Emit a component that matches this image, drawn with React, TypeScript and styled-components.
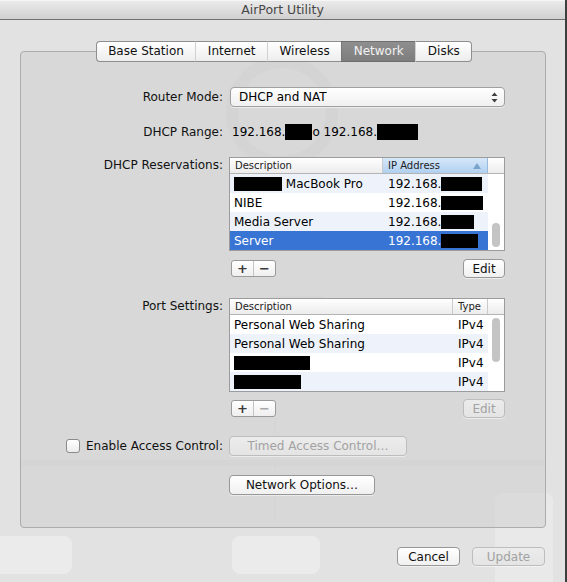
import React from 'react';
import styled, { createGlobalStyle, css } from 'styled-components';

const GlobalStyle = createGlobalStyle`
  html, body {
    margin: 0;
    padding: 0;
  }

  body {
    font-family: "DejaVu Sans", "Liberation Sans", sans-serif;
    background: #e2e2e2;
    color: #000;
  }
`;

type Cell = { text?: string; redact?: number; redactBefore?: boolean };
type Row = { desc: Cell; value: Cell; tone: 'plain' | 'alt' | 'selected' };

const reservations: Row[] = [
  { desc: { text: 'MacBook Pro', redact: 48, redactBefore: true }, value: { text: '192.168.', redact: 41 }, tone: 'alt' },
  { desc: { text: 'NIBE' }, value: { text: '192.168.', redact: 42 }, tone: 'plain' },
  { desc: { text: 'Media Server' }, value: { text: '192.168.', redact: 33 }, tone: 'alt' },
  { desc: { text: 'Server' }, value: { text: '192.168.', redact: 37 }, tone: 'selected' },
];

const ports: Row[] = [
  { desc: { text: 'Personal Web Sharing' }, value: { text: 'IPv4' }, tone: 'plain' },
  { desc: { text: 'Personal Web Sharing' }, value: { text: 'IPv4' }, tone: 'alt' },
  { desc: { redact: 76 }, value: { text: 'IPv4' }, tone: 'plain' },
  { desc: { redact: 67 }, value: { text: 'IPv4' }, tone: 'alt' },
];

function CellContent({ cell }: { cell: Cell }) {
  if (cell.redactBefore) {
    return (
      <>
        <Redacted $w={cell.redact || 0} $h={14} />
        &nbsp;{cell.text}
      </>
    );
  }
  return (
    <>
      {cell.text}
      {cell.redact ? <Redacted $w={cell.redact} $h={14} /> : null}
    </>
  );
}

type ListProps = {
  firstCol: string;
  secondCol: string;
  firstWidth: number;
  sorted?: boolean;
  rows: Row[];
  thumbTop: number;
  thumbHeight: number;
};

function ListTable(props: ListProps) {
  const { firstCol, secondCol, firstWidth, sorted, rows, thumbTop, thumbHeight } = props;
  return (
    <StyledTable>
      <StyledHeader>
        <HeaderCell style={{ width: firstWidth }}>{firstCol}</HeaderCell>
        <HeaderCell $sorted={sorted} $grow>
          {secondCol}
          {sorted && (
            <SortArrow viewBox="0 0 8 6" width="8" height="6">
              <path d="M4 0 L8 6 L0 6 Z" fill="#7aa3cc" />
            </SortArrow>
          )}
        </HeaderCell>
        <HeaderCell $corner />
      </StyledHeader>
      <StyledBody>
        <StyledRows>
          {rows.map((row, i) => (
            <StyledRow key={i} $tone={row.tone}>
              <BodyCell style={{ width: firstWidth }}>
                <CellContent cell={row.desc} />
              </BodyCell>
              <BodyCell $second>
                <CellContent cell={row.value} />
              </BodyCell>
            </StyledRow>
          ))}
        </StyledRows>
        <ScrollTrack>
          <ScrollThumb style={{ marginTop: thumbTop, height: thumbHeight }} />
        </ScrollTrack>
      </StyledBody>
    </StyledTable>
  );
}

function AddRemove({ removeDisabled }: { removeDisabled?: boolean }) {
  return (
    <StyledSegment>
      <SegmentButton>+</SegmentButton>
      <SegmentButton $disabled={removeDisabled}>&minus;</SegmentButton>
    </StyledSegment>
  );
}

function Backdrop() {
  return (
    <StyledBackdrop viewBox="0 0 567 582" width="567" height="582">
      <circle cx="282" cy="112" r="50" fill="none" stroke="#d9d9d9" strokeWidth="12" />
      <rect x="-10" y="536" width="82" height="38" rx="8" fill="#ebebeb" />
      <rect x="232" y="536" width="88" height="38" rx="8" fill="#ebebeb" />
      <rect x="495" y="493" width="58" height="100" rx="8" fill="#e9e9e9" />
      <rect x="268" y="296" width="62" height="22" rx="9" fill="#dcdcdc" />
      <rect x="274" y="420" width="2" height="100" fill="#dedede" />
      <rect x="20" y="460" width="526" height="6" fill="#dbdbdb" />
    </StyledBackdrop>
  );
}

function App() {
  return (
    <>
      <GlobalStyle />
      <StyledWindow>
        <Backdrop />
        <TitleBar>AirPort Utility</TitleBar>
        <StyledContent>
          <TabBar>
            <Tab>Base Station</Tab>
            <Tab>Internet</Tab>
            <Tab>Wireless</Tab>
            <Tab $active>Network</Tab>
            <Tab $last>Disks</Tab>
          </TabBar>

          <GroupBox>
            <FormRow $top={0}>
              <Label>Router Mode:</Label>
              <Popup>
                DHCP and NAT
                <svg width="7" height="11" viewBox="0 0 7 11">
                  <path d="M3.5 0.5 L6.5 4 L0.5 4 Z" fill="#404040" />
                  <path d="M3.5 10.5 L6.5 7 L0.5 7 Z" fill="#404040" />
                </svg>
              </Popup>
            </FormRow>

            <FormRow $top={15}>
              <Label>DHCP Range:</Label>
              <RangeValue>
                192.168.
                <Redacted $w={27} $h={16} />o 192.168.
                <Redacted $w={41} $h={16} />
              </RangeValue>
            </FormRow>

            <FormRow $top={15} $alignTop>
              <Label $padTop={1}>DHCP Reservations:</Label>
              <ListTable
                firstCol="Description"
                secondCol="IP Address"
                firstWidth={153}
                sorted
                rows={reservations}
                thumbTop={49}
                thumbHeight={24}
              />
            </FormRow>

            <FormRow $top={8}>
              <span />
              <ToolRow>
                <AddRemove />
                <PushButton $width={42}>Edit</PushButton>
              </ToolRow>
            </FormRow>

            <FormRow $top={20} $alignTop>
              <Label $padTop={1}>Port Settings:</Label>
              <ListTable
                firstCol="Description"
                secondCol="Type"
                firstWidth={223}
                rows={ports}
                thumbTop={3}
                thumbHeight={44}
              />
            </FormRow>

            <FormRow $top={7}>
              <span />
              <ToolRow>
                <AddRemove removeDisabled />
                <PushButton $width={42} disabled>
                  Edit
                </PushButton>
              </ToolRow>
            </FormRow>

            <FormRow $top={18}>
              <CheckLabel>
                <CheckBox />
                Enable Access Control:
              </CheckLabel>
              <div>
                <PushButton $width={178} $height={20} disabled>
                  Timed Access Control…
                </PushButton>
              </div>
            </FormRow>

            <FormRow $top={19}>
              <span />
              <div>
                <PushButton $width={146} $height={20}>
                  Network Options…
                </PushButton>
              </div>
            </FormRow>
          </GroupBox>

          <StyledFooter>
            <PushButton $width={63}>Cancel</PushButton>
            <PushButton $width={73} disabled>
              Update
            </PushButton>
          </StyledFooter>
        </StyledContent>
      </StyledWindow>
    </>
  );
}

const StyledWindow = styled.div`
  position: relative;
  width: 567px;
  height: 582px;
  box-sizing: border-box;
  border-right: 2px solid #3e3e3e;
  background: #e2e2e2;
  overflow: hidden;
`;

const StyledBackdrop = styled.svg`
  position: absolute;
  left: 0;
  top: 0;
  pointer-events: none;
`;

const TitleBar = styled.div`
  position: relative;
  height: 19px;
  line-height: 19px;
  text-align: center;
  font-size: 12.5px;
  color: #474747;
  background: linear-gradient(#ececec, #d0d0d0);
  border-bottom: 1px solid #6f6f6f;
  box-shadow: inset 0 1px 0 #f6f6f6;
`;

const StyledContent = styled.div`
  position: relative;
  padding: 21px 19px 0 20px;
`;

const TabBar = styled.div`
  position: relative;
  z-index: 1;
  display: flex;
  justify-content: center;
  margin-left: 2px;
`;

const Tab = styled.div<{ $active?: boolean; $last?: boolean }>`
  height: 19px;
  line-height: 19px;
  padding: 0 11.5px;
  font-size: 12px;
  color: #111;
  background: linear-gradient(#ffffff, #ededed);
  border-top: 1px solid #8e8e8e;
  border-bottom: 1px solid #8e8e8e;
  border-left: 1px solid #d0d0d0;

  &:first-child {
    border-left: 1px solid #8e8e8e;
    border-radius: 4px 0 0 4px;
  }

  ${(p) =>
    p.$last &&
    css`
      border-right: 1px solid #8e8e8e;
      border-radius: 0 4px 4px 0;
    `}

  ${(p) =>
    p.$active &&
    css`
      color: #f2f2f2;
      background: linear-gradient(#8f8f8f, #7d7d7d);
      border-left-color: #777;
      border-top-color: #6e6e6e;
      border-bottom-color: #6e6e6e;
    `}
`;

const GroupBox = styled.div`
  position: relative;
  margin-top: -11px;
  height: 477px;
  box-sizing: border-box;
  padding-top: 35px;
  border: 1px solid #acacac;
  border-radius: 4px;
  background: rgba(208, 208, 208, 0.55);
`;

const FormRow = styled.div<{ $top: number; $alignTop?: boolean }>`
  display: grid;
  grid-template-columns: 202px 276px;
  column-gap: 6px;
  align-items: ${(p) => (p.$alignTop ? 'start' : 'center')};
  margin-top: ${(p) => p.$top}px;
`;

const Label = styled.div<{ $padTop?: number }>`
  text-align: right;
  font-size: 12px;
  color: #111;
  padding-top: ${(p) => p.$padTop || 0}px;
`;

const Popup = styled.div`
  display: flex;
  align-items: center;
  justify-content: space-between;
  height: 20px;
  box-sizing: border-box;
  margin-left: 1px;
  padding: 0 6px 0 8px;
  font-size: 12px;
  background: linear-gradient(#ffffff, #f0f0f0);
  border: 1px solid #a0a0a0;
  border-radius: 4px;
  box-shadow: 0 1px 0 rgba(255, 255, 255, 0.5);
`;

const RangeValue = styled.div`
  display: flex;
  align-items: center;
  height: 20px;
  padding-left: 3px;
  font-size: 12px;
`;

const Redacted = styled.span<{ $w: number; $h: number }>`
  display: inline-block;
  width: ${(p) => p.$w}px;
  height: ${(p) => p.$h}px;
  background: #000;
  vertical-align: middle;
`;

const StyledTable = styled.div`
  border: 1px solid #9c9c9c;
  background: #fff;
`;

const StyledHeader = styled.div`
  display: flex;
  height: 15px;
  background: linear-gradient(#ffffff, #ececec);
  border-bottom: 1px solid #b4b4b4;
  font-size: 10px;
  color: #222;
`;

const HeaderCell = styled.div<{ $sorted?: boolean; $grow?: boolean; $corner?: boolean }>`
  display: flex;
  align-items: center;
  justify-content: space-between;
  box-sizing: border-box;
  padding-left: 5px;
  height: 15px;
  border-right: 1px solid #cbcbcb;
  flex: ${(p) => (p.$grow ? 1 : 'none')};
  ${(p) =>
    p.$corner &&
    css`
      width: 16px;
      border-right: none;
    `}
  ${(p) =>
    p.$sorted &&
    css`
      background: linear-gradient(#d7e8f9, #b0d0f0);
      border-right-color: #96b9dc;
    `}
`;

const SortArrow = styled.svg`
  margin-right: 6px;
`;

const StyledBody = styled.div`
  display: flex;
`;

const StyledRows = styled.div`
  flex: 1;
`;

const StyledRow = styled.div<{ $tone: 'plain' | 'alt' | 'selected' }>`
  display: flex;
  align-items: center;
  height: 19px;
  font-size: 12px;
  overflow: hidden;
  background: ${(p) => (p.$tone === 'alt' ? '#eef3fb' : p.$tone === 'selected' ? '#3874d4' : '#fff')};
  color: ${(p) => (p.$tone === 'selected' ? '#fff' : '#000')};
`;

const BodyCell = styled.div<{ $second?: boolean }>`
  display: flex;
  align-items: center;
  box-sizing: border-box;
  padding-left: ${(p) => (p.$second ? 5 : 4)}px;
  white-space: nowrap;
  flex: ${(p) => (p.$second ? 1 : 'none')};
`;

const ScrollTrack = styled.div`
  width: 16px;
  background: #fff;
`;

const ScrollThumb = styled.div`
  width: 8px;
  margin-left: 4px;
  border-radius: 4px;
  background: #c4c4c4;
`;

const ToolRow = styled.div`
  display: flex;
  justify-content: space-between;
  align-items: center;
  padding-left: 2px;
`;

const StyledSegment = styled.div`
  display: flex;
  height: 17px;
  box-sizing: border-box;
  border: 1px solid #9a9a9a;
  border-radius: 3px;
  background: linear-gradient(#ffffff, #efefef);
  overflow: hidden;
`;

const SegmentButton = styled.div<{ $disabled?: boolean }>`
  width: 21px;
  text-align: center;
  font-size: 13px;
  font-weight: bold;
  line-height: 15px;
  color: ${(p) => (p.$disabled ? '#a8a8a8' : '#3a3a3a')};

  & + & {
    border-left: 1px solid #c4c4c4;
  }
`;

const PushButton = styled.button<{ $width: number; $height?: number }>`
  display: block;
  width: ${(p) => p.$width}px;
  height: ${(p) => p.$height || 19}px;
  padding: 0;
  font-family: "DejaVu Sans", "Liberation Sans", sans-serif;
  font-size: 12px;
  color: #111;
  background: linear-gradient(#ffffff, #f0f0f0);
  border: 1px solid #979797;
  border-radius: 4px;
  box-shadow: 0 1px 0 rgba(255, 255, 255, 0.5);

  &:disabled {
    color: #a2a2a2;
    background: linear-gradient(#ececec, #e4e4e4);
    border-color: #bdbdbd;
  }
`;

const CheckLabel = styled.label`
  display: flex;
  align-items: center;
  justify-content: flex-end;
  gap: 6px;
  font-size: 12px;
  color: #111;
`;

const CheckBox = styled.span`
  width: 14px;
  height: 14px;
  box-sizing: border-box;
  border: 1px solid #8a8a8a;
  border-radius: 3px;
  background: linear-gradient(#ffffff, #ececec);
`;

const StyledFooter = styled.div`
  display: flex;
  justify-content: flex-end;
  gap: 12px;
  padding-top: 19px;
  padding-right: 1px;
`;

export default App;
